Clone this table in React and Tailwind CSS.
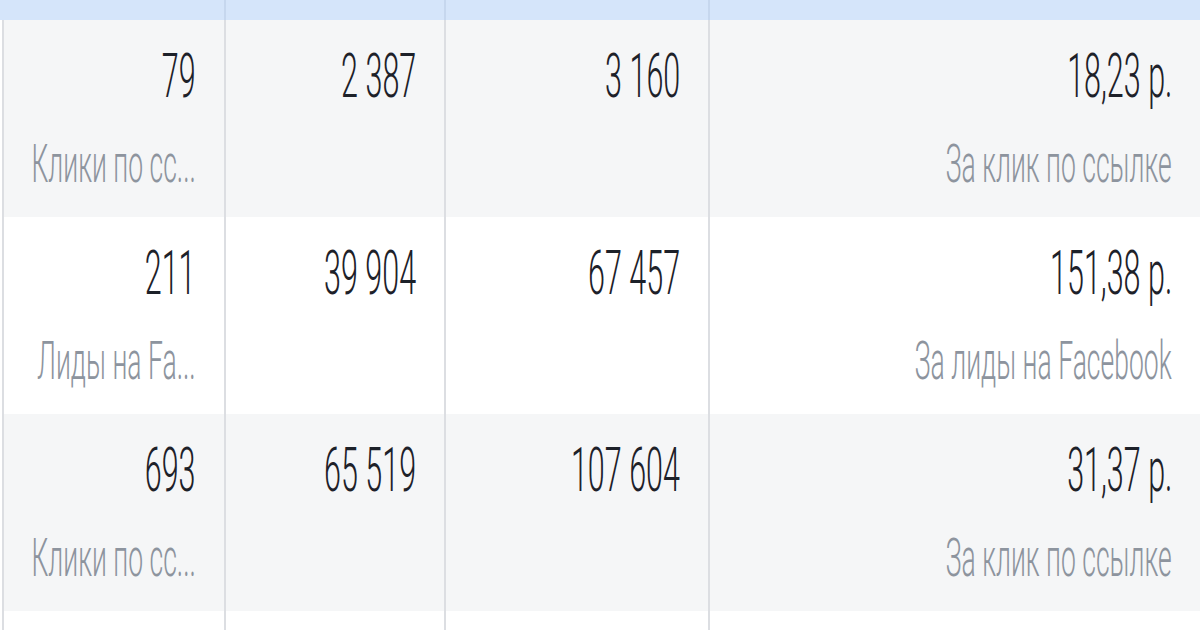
const ROWS = [
  { bg: 'bg-[#f5f6f7]', cells: ['79', '2 387', '3 160', '18,23 р.'], left: 'Клики по сс...', right: 'За клик по ссылке' },
  { bg: 'bg-white', cells: ['211', '39 904', '67 457', '151,38 р.'], left: 'Лиды на Fa...', right: 'За лиды на Facebook' },
  { bg: 'bg-[#f5f6f7]', cells: ['693', '65 519', '107 604', '31,37 р.'], left: 'Клики по сс...', right: 'За клик по ссылке' },
  { bg: 'bg-white', cells: ['', '', '', ''], left: '', right: '' },
]

const COLS = ['w-[224px] shrink-0 border-l-2', 'w-[220px] shrink-0', 'w-[264px] shrink-0', 'flex-1 min-w-0']

function Cell({ col, value, label }) {
  return (
    <div className={`${COLS[col]} ${col < 3 ? 'border-r-2' : ''} border-[#dcdee2] pt-[26px] pr-[28px] flex flex-col items-end overflow-hidden`}>
      {value && (
        <div className="w-max shrink-0 text-[61px] leading-none font-light text-[#1d2129] whitespace-nowrap origin-right scale-x-50">{value}</div>
      )}
      {label && (
        <div className="w-max shrink-0 mt-[31px] text-[53px] leading-none font-light text-[#8d949e] whitespace-nowrap origin-right scale-x-50">{label}</div>
      )}
    </div>
  )
}

export default function App() {
  return (
    <div className="w-[1200px] h-[630px] bg-white overflow-hidden pl-[2px] font-['Roboto',sans-serif]">
      {/* header strip */}
      <div className="flex h-[20px] bg-[#d5e5fa] -ml-[2px] pl-[2px]">
        <div className="w-[224px] shrink-0 border-r-2 border-[#c6d7ee]" />
        <div className="w-[220px] shrink-0 border-r-2 border-[#c6d7ee]" />
        <div className="w-[264px] shrink-0 border-r-2 border-[#c6d7ee]" />
        <div className="flex-1" />
      </div>

      {ROWS.map((r, i) => (
        <div key={i} className={`flex h-[197px] ${r.bg}`}>
          <Cell col={0} value={r.cells[0]} label={r.left} />
          <Cell col={1} value={r.cells[1]} />
          <Cell col={2} value={r.cells[2]} />
          <Cell col={3} value={r.cells[3]} label={r.right} />
        </div>
      ))}
    </div>
  )
}
